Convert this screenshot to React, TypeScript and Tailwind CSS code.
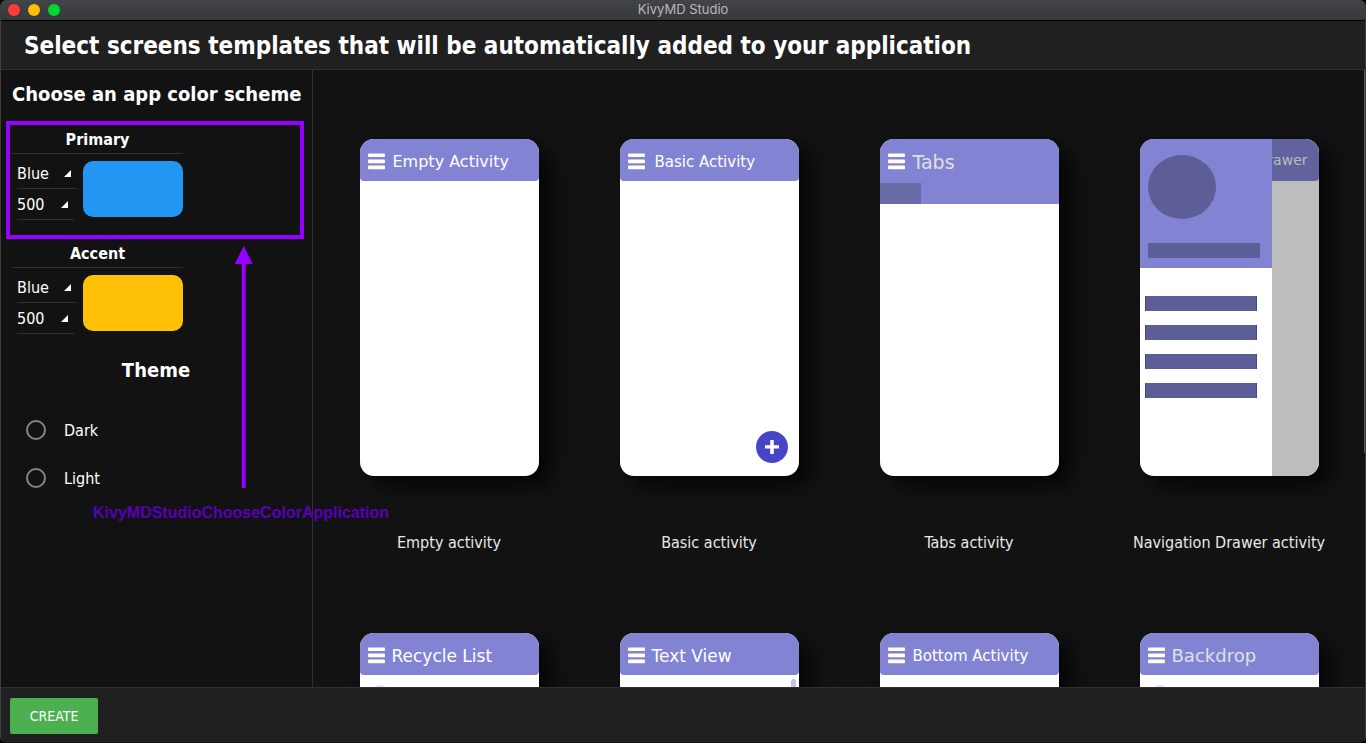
import React, { useState } from "react";

const SANS = "font-['DejaVu_Sans_Condensed','DejaVu_Sans',sans-serif]";

function MenuIcon() {
  return (
    <svg width="17" height="17" viewBox="0 0 17 17" fill="#fff" className="shrink-0">
      <rect x="0" y="0.5" width="17" height="3.6" rx="1" />
      <rect x="0" y="6.6" width="17" height="3.6" rx="1" />
      <rect x="0" y="12.6" width="17" height="3.6" rx="1" />
    </svg>
  );
}

function PhoneBar({ title, text }: { title: string; text: string }) {
  return (
    <div className="flex h-[42px] items-center rounded-b bg-[#8383d4] pt-[3px] pl-2 font-['DejaVu_Sans',sans-serif]">
      <MenuIcon />
      <span className={"leading-6 whitespace-nowrap " + text}>{title}</span>
    </div>
  );
}

function DrawerPreview() {
  return (
    <div className="flex h-full">
      <div className="w-[132px] shrink-0">
        <div className="flex h-[129px] flex-col justify-between bg-[#8383d4] px-2 pt-4 pb-[10px]">
          <div className="h-16 w-[68px] rounded-[50%] bg-[#5d5d97]" />
          <div className="h-[15px] w-28 bg-[#5d5d97]" />
        </div>
        <div className="flex flex-col gap-[14px] pt-7 pl-[5px]">
          {[0, 1, 2, 3].map((i) => (
            <div key={i} className="h-[15px] w-28 border-x border-[#44448f] bg-[#5d5d97]" />
          ))}
        </div>
      </div>
      <div className="min-w-0 flex-1 bg-[#bdbdbd]">
        <div className="flex h-[42px] items-center justify-end overflow-hidden rounded-br bg-[#62629f] pr-[11px] font-['DejaVu_Sans',sans-serif] text-sm text-[#bdbdbd]">
          rawer
        </div>
      </div>
    </div>
  );
}

const light = "text-[#e0e0e0]";

const templates: { id: string; caption?: string; preview: React.ReactNode }[] = [
  {
    id: "empty",
    caption: "Empty activity",
    preview: <PhoneBar title="Empty Activity" text="pl-2 text-base text-white" />,
  },
  {
    id: "basic",
    caption: "Basic activity",
    preview: (
      <>
        <PhoneBar title="Basic Activity" text="pl-[10px] text-[15px] text-white" />
        <div className="absolute right-[11px] bottom-[13px] flex size-8 items-center justify-center rounded-full bg-[#4545c6]">
          <svg width="14" height="14" viewBox="0 0 14 14" fill="#fff">
            <path d="M5.2 0h3.6v5.2H14v3.2H8.8V14H5.2V8.4H0V5.2h5.2z" />
          </svg>
        </div>
      </>
    ),
  },
  {
    id: "tabs",
    caption: "Tabs activity",
    preview: (
      <div className="h-[65px] bg-[#8383d4]">
        <PhoneBar title="Tabs" text={"pl-2 text-[19px] " + light} />
        <div className="mt-[2px] h-[21px] w-[41px] bg-[#6b6ba8]" />
      </div>
    ),
  },
  { id: "drawer", caption: "Navigation Drawer activity", preview: <DrawerPreview /> },
  {
    id: "recycle",
    preview: (
      <>
        <PhoneBar title="Recycle List" text="pl-[7px] text-[17px] text-white" />
        <div className="mt-[10px] ml-3 size-4 rounded-full bg-[#e3e3f4]" />
      </>
    ),
  },
  {
    id: "text",
    preview: (
      <>
        <PhoneBar title="Text View" text="pl-[7px] text-[17px] text-white" />
        <div className="mt-1 mr-[3px] ml-auto h-20 w-[5px] rounded-full bg-[#c1c1ea]" />
      </>
    ),
  },
  { id: "bottom", preview: <PhoneBar title="Bottom Activity" text="pl-2 text-[15px] text-white" /> },
  {
    id: "backdrop",
    preview: (
      <>
        <PhoneBar title="Backdrop" text={"pl-[7px] text-lg " + light} />
        <div className="mt-[10px] ml-3 size-4 rounded-full bg-[#e3e3f4]" />
      </>
    ),
  },
];

function Picker({ label, options, width }: { label: string; options: string[]; width: string }) {
  return (
    <div className={"relative flex h-[31px] items-center border-b border-[#303030] " + width}>
      <select
        aria-label={label}
        className="h-full w-full appearance-none bg-transparent pt-px text-base text-white outline-none"
      >
        {options.map((o) => (
          <option key={o} className="bg-[#202020]">
            {o}
          </option>
        ))}
      </select>
      <svg
        width="7"
        height="7"
        viewBox="0 0 7 7"
        fill="#fff"
        className="pointer-events-none absolute top-3 right-[6px]"
      >
        <path d="M7 0v7H0z" />
      </svg>
    </div>
  );
}

function Scheme({ title, swatch }: { title: string; swatch: string }) {
  return (
    <section className="w-[171px]">
      <h3 className="border-b border-[#303030] pb-px text-center text-base leading-6 font-bold">{title}</h3>
      <div className="flex justify-between pl-[5px]">
        <div className="pt-1">
          <Picker label={title + " color"} options={["Blue", "Red", "Amber"]} width="w-[60px]" />
          <Picker label={title + " hue"} options={["500", "600", "700"]} width="w-[57px]" />
        </div>
        <div className={"mt-[7px] h-14 w-[100px] rounded-[10px] " + swatch} />
      </div>
    </section>
  );
}

export default function App() {
  const [theme, setTheme] = useState("");
  return (
    <div className="h-screen bg-black">
      <div
        className={
          "relative flex h-full flex-col overflow-hidden rounded-t-md rounded-b-md border-x border-b border-[#3d3d3d] border-b-[#141414] bg-[#121212] text-white " +
          SANS
        }
      >
        <div className="relative flex h-[21px] shrink-0 items-center justify-center border-b border-black bg-linear-to-b from-[#434447] to-[#37383b]">
          <div className="absolute top-1 left-[7px] flex gap-2">
            <button aria-label="Close" className="size-3 rounded-full bg-[#ff3b37]" />
            <button aria-label="Minimize" className="size-3 rounded-full bg-[#ffbd05]" />
            <button aria-label="Zoom" className="size-3 rounded-full bg-[#00d733]" />
          </div>
          <span className="font-[Inter,sans-serif] text-[13px] text-[#b8b8b9]">KivyMD Studio</span>
        </div>

        <header className="flex h-[49px] shrink-0 items-center border-b border-[#303030] bg-[#202020] pt-[2px] pl-[23px]">
          <h1 className="text-2xl font-bold whitespace-nowrap">
            Select screens templates that will be automatically added to your application
          </h1>
        </header>

        <div className="flex min-h-0 flex-1">
          <aside className="w-[312px] shrink-0 border-r border-[#303030] pt-3 pl-[11px]">
            <h2 className="text-xl leading-6 font-bold whitespace-nowrap">Choose an app color scheme</h2>
            <div className="mt-[22px] flex flex-col gap-[22px]">
              <Scheme title="Primary" swatch="bg-[#2196f3]" />
              <Scheme title="Accent" swatch="bg-[#ffc107]" />
            </div>
            <fieldset className="mt-6">
              <legend className="w-full pr-3 text-center text-xl leading-6 font-bold">Theme</legend>
              <div className="mt-6 pl-[14px]">
                {["Dark", "Light"].map((t) => (
                  <label key={t} className="flex h-12 items-center gap-[18px] text-base">
                    <input
                      type="radio"
                      name="theme"
                      checked={theme === t}
                      onChange={() => setTheme(t)}
                      className="size-5 appearance-none rounded-full border-2 border-[#838383] checked:bg-[#2196f3]"
                    />
                    <span className="pt-[2px]">{t}</span>
                  </label>
                ))}
              </div>
            </fieldset>
          </aside>

          <main className="min-w-0 flex-1 overflow-y-auto pt-[69px] pr-[5px] pl-[6px] [scrollbar-width:none]">
            <div className="grid grid-cols-4 gap-y-[78px]">
              {templates.map((t) => (
                <figure key={t.id} className="flex flex-col items-center">
                  <div className="w-[179px] rounded-[14px] shadow-[12px_10px_20px_rgba(0,0,0,0.7)]">
                    <div className="relative h-[337px] overflow-hidden rounded-[14px] bg-white">{t.preview}</div>
                  </div>
                  {t.caption && (
                    <figcaption className="mt-[55px] text-base leading-6 whitespace-nowrap text-[#e8e8e8]">
                      {t.caption}
                    </figcaption>
                  )}
                </figure>
              ))}
            </div>
          </main>
          <div className="w-px shrink-0">
            <div className="h-[62%] bg-[#5a5a5a]" />
          </div>
        </div>

        <footer className="flex h-[55px] shrink-0 items-center border-t border-[#303030] bg-[#202020] pt-px pl-[9px]">
          <button className="h-9 w-[88px] rounded-[2px] bg-[#4caf50] text-sm text-white">CREATE</button>
        </footer>

        <div className="pointer-events-none absolute top-[121px] left-[5px] h-[118px] w-[298px] border-4 border-[#9500ff]" />
        <svg
          width="18"
          height="242"
          viewBox="0 0 18 242"
          fill="#9500ff"
          className="pointer-events-none absolute top-[246px] left-[234px]"
        >
          <path d="M8.7 0l9 18h-7v224h-4V18h-7z" />
        </svg>
        <p className="pointer-events-none absolute top-[501px] left-[92px] font-['Liberation_Sans',sans-serif] text-base leading-6 font-bold text-[#5700b8]">
          KivyMDStudioChooseColorApplication
        </p>
      </div>
    </div>
  );
}
